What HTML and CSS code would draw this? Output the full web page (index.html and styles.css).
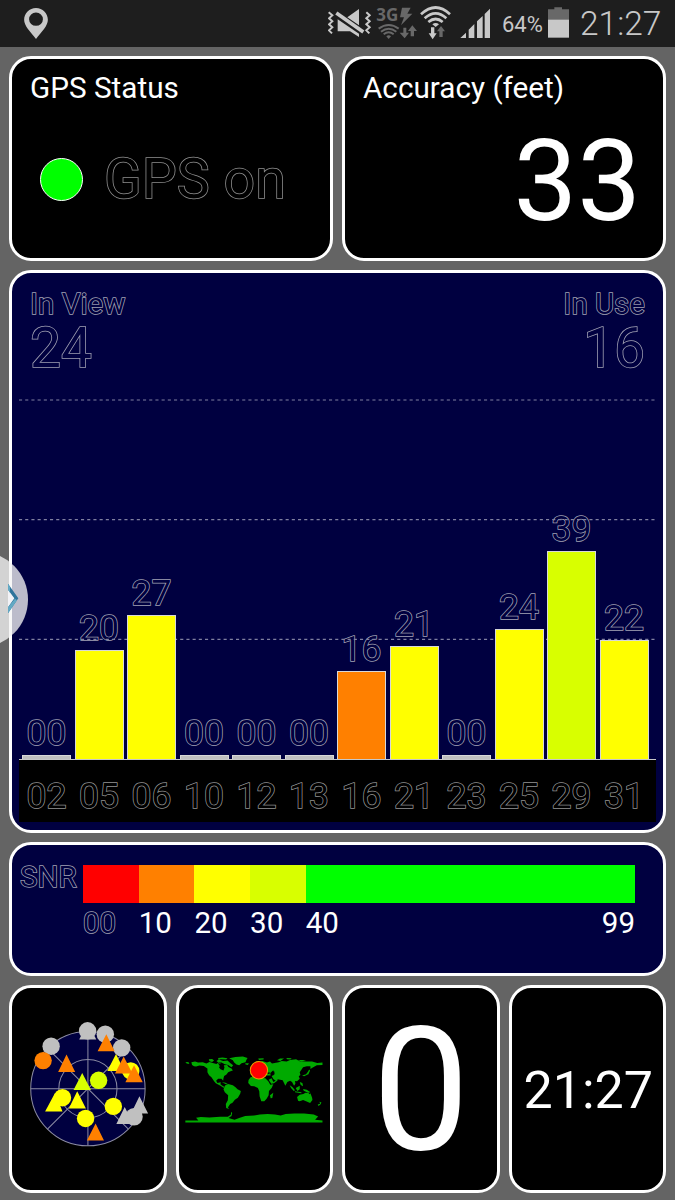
FILE: index.html
```html
<!DOCTYPE html>
<html lang="en">
<head>
<meta charset="utf-8">
<title>GPS Status</title>
<link rel="stylesheet" href="styles.css">
</head>
<body>
<header class="statusbar">
  <svg class="pin" viewBox="72 24 72 94"><path fill="#c8c8c8" fill-rule="evenodd" d="M108 24C88 24 72 40 72 60C72 79 91 96 108 118C125 96 144 79 144 60C144 40 128 24 108 24ZM108 38a21 20 0 1 1 0 40a21 20 0 1 1 0-40Z"/></svg>
  <div class="tray">
    <svg class="i-mute" viewBox="24 0 141 141">
      <g fill="none" stroke="#c8c8c8" stroke-width="6"><path d="M26 37L37 46L27 55L37 64L27 73L37 82L27 91L36 100M139 37L149 46L139 55L149 64L139 73L149 82L139 91L148 100"/></g>
      <path fill="#c8c8c8" d="M53 58L117 101V111L90 94H53ZM82 52L117 27V76Z"/>
      <path stroke="#c8c8c8" stroke-width="11" d="M49 39L130 96"/>
    </svg>
    <svg class="i-data" viewBox="165 0 132 141">
      <text class="g3" x="169" y="64">3G</text>
      <g fill="#686868"><path d="M246 23H272L262 41H277L243 76L252 52H240Z"/><path d="M250 83H259V98H267L254 115L239 98H250ZM272 109H282V93H291L277 76L264 93H272Z"/><path d="M199 109Q206 102 213 109L206 117Z"/></g>
      <g fill="none" stroke="#686868" stroke-width="6"><path d="M176 86Q206 64 236 86M183 95Q206 77 229 95M191 103Q206 91 221 103"/></g>
    </svg>
    <svg class="i-wifi" viewBox="297 0 108 141">
      <g fill="none" stroke="#c8c8c8" stroke-width="8"><path d="M303 43Q347 2 390 43M314 55Q347 25 379 55M325 66Q347 48 368 66"/></g>
      <path fill="#c8c8c8" d="M337 73Q347 65 357 73L347 81ZM333 82H343V100H350L338 118L326 100H333Z"/>
      <path fill="#686868" d="M358 111H368V94H375L363 78L351 94H358Z"/>
    </svg>
    <svg class="i-signal" viewBox="405 0 135 141"><path fill="#c8c8c8" d="M421 114L438 98V114ZM446 89L463 72V114H446ZM471 64L488 48V114H471ZM494 42L510 26V114H494Z"/></svg>
    <span class="pct">64%</span>
    <svg class="i-batt" viewBox="672 0 90 141"><path fill="#686868" d="M684 28H703V22H726V28H747V60H684Z"/><path fill="#c8c8c8" d="M684 59H747V113H684Z"/></svg>
    <span class="clock">21:27</span>
  </div>
</header>

<main class="panels">
  <section class="row top">
    <article class="card">
      <h2 class="title">GPS Status</h2>
      <div class="state"><i class="led"></i><span class="outline dark gps">GPS on</span></div>
    </article>
    <article class="card">
      <h2 class="title">Accuracy (feet)</h2>
      <div class="accuracy">33</div>
    </article>
  </section>

  <section class="card navy chart">
    <div class="counts outline">
      <div><p class="lbl">In View</p><p class="num">24</p></div>
      <div class="right"><p class="lbl">In Use</p><p class="num">16</p></div>
    </div>
    <div class="plot">
      <div class="bars outline">
        <div class="col"><span>00</span><i class="bar gray" style="height:4.5px"></i></div>
        <div class="col"><span>20</span><i class="bar yellow" style="height:109px"></i></div>
        <div class="col"><span>27</span><i class="bar yellow" style="height:144.5px"></i></div>
        <div class="col"><span>00</span><i class="bar gray" style="height:4.5px"></i></div>
        <div class="col"><span>00</span><i class="bar gray" style="height:4.5px"></i></div>
        <div class="col"><span>00</span><i class="bar gray" style="height:4.5px"></i></div>
        <div class="col"><span>16</span><i class="bar orange" style="height:88.5px"></i></div>
        <div class="col"><span>21</span><i class="bar yellow" style="height:113px"></i></div>
        <div class="col"><span>00</span><i class="bar gray" style="height:4.5px"></i></div>
        <div class="col"><span>24</span><i class="bar yellow" style="height:130.5px"></i></div>
        <div class="col"><span>39</span><i class="bar lime" style="height:208.5px"></i></div>
        <div class="col"><span>22</span><i class="bar yellow" style="height:119px"></i></div>
      </div>
      <svg class="grid" viewBox="0 0 636 384"><g stroke="#8080a0" stroke-width="1.2" stroke-dasharray="3.1 3.1"><path d="M0 25H636M0 144.7H636M0 264.4H636"/></g></svg>
    </div>
    <div class="ids outline dark"><span>02</span><span>05</span><span>06</span><span>10</span><span>12</span><span>13</span><span>16</span><span>21</span><span>23</span><span>25</span><span>29</span><span>31</span></div>
  </section>

  <section class="card navy snr">
    <span class="snr-label outline">SNR</span>
    <div class="scale">
      <div class="ramp"><i class="red"></i><i class="orange"></i><i class="yellow"></i><i class="lime"></i><i class="green"></i></div>
      <div class="ticks"><span class="outline">00</span><span>10</span><span>20</span><span>30</span><span>40</span><span class="last">99</span></div>
    </div>
  </section>

  <section class="row bottom">
    <article class="card">
      <svg class="fill" viewBox="36 26 453 600">
        <circle cx="263" cy="325" r="171" fill="#000040"/>
        <g fill="none" stroke="#8c8ca4" stroke-width="3"><circle cx="263" cy="325" r="171"/><circle cx="263" cy="325" r="87"/><path d="M92 325H434M263 154V496M142 446L384 204M142 204L384 446"/></g>
        <g fill="#c0c0c0"><circle cx="262" cy="152" r="26"/><path d="M237 178L262 128L288 178Z"/><circle cx="315" cy="162" r="26"/><circle cx="364" cy="203" r="26"/><circle cx="153" cy="198" r="26"/><circle cx="401" cy="409" r="26"/><path d="M348 431L373 380L399 431ZM392 399L417 348L443 399Z"/></g>
        <circle cx="129" cy="241" r="26" fill="#ff8000"/>
        <path fill="#ff8000" d="M174 275L199 223L225 275ZM292 213L318 162L343 213ZM260 480L286 429L311 480Z"/>
        <g fill="#ff0"><circle cx="391" cy="272" r="26"/><circle cx="339" cy="378" r="26"/><circle cx="187" cy="352" r="26"/><circle cx="256" cy="414" r="26"/><path d="M321 272L347 221L372 272ZM135 393L165 337L187 393ZM206 384L231 333L257 384Z"/></g>
        <path fill="#ff8000" d="M344 280L370 229L396 280ZM375 306L401 255L427 306Z"/>
        <circle cx="295" cy="300" r="26" fill="#d8ff00"/><path fill="#d8ff00" d="M220 329L246 278L272 329Z"/>
      </svg>
    </article>
    <article class="card">
      <svg class="fill" viewBox="27 -124 453 600">
        <g fill="#00aa00">
          <path d="M46 96L55 95L58 101L50 100ZM64 96L75 94L84 97L98 96L109 100L118 95L128 98L139 101L145 97L151 100L154 105L146 110L151 117L160 121L163 112L161 105L171 104L175 110L184 115L188 121L181 123L174 126L169 133L162 137L160 144L159 151L154 145L144 145L138 151L142 158L152 156L151 162L159 168L166 170L160 172L151 166L137 159L132 153L124 141L117 135L112 126L112 115L101 107L88 106L78 109L72 108L66 104Z"/>
          <path d="M116 87L126 86L132 91L126 95L118 93ZM139 92L146 88L159 92L172 91L180 98L189 105L184 111L174 104L164 102L154 97L144 97ZM144 83L157 82L172 84L168 88L153 87L145 88ZM177 84L196 80L218 79L232 83L228 90L226 96L214 99L207 105L199 103L192 97L188 90ZM155 155L166 157L173 161L166 161ZM225 99L236 99L233 104L226 103Z"/>
          <path d="M166 164L174 161L188 165L196 171L202 177L212 182L210 190L203 202L194 208L187 217L180 221L173 231L177 236L168 233L167 221L173 210L174 195L164 186L160 177L163 171Z"/>
          <path d="M241 125L250 119L254 109L264 97L276 92L290 97L299 94L305 100L325 96L334 92L349 94L359 89L377 87L388 93L408 94L425 94L440 98L456 97L456 104L439 105L427 112L420 116L420 108L409 108L398 111L388 126L390 134L385 138L388 145L380 153L374 152L375 160L371 166L365 155L359 151L351 155L345 166L337 150L322 147L321 151L311 159L303 160L295 148L304 144L309 155L316 151L309 146L304 137L311 134L309 120L300 128L301 136L286 136L280 129L270 132L258 124L251 132L242 134Z"/>
          <path d="M241 141L255 138L268 142L285 144L294 153L300 163L309 162L304 173L296 182L295 195L289 205L282 213L273 213L268 198L267 183L263 173L252 168L242 167L234 158L235 149ZM299 195L309 187L306 203L301 204Z"/>
          <path d="M380 200L388 193L399 191L405 187L414 188L418 192L420 189L425 202L426 209L419 218L407 213L398 209L388 213L383 211ZM398 176L409 178L420 186L413 187L400 181ZM358 165L366 170L374 180L370 182L362 173ZM376 173L388 166L388 177L381 182ZM374 183L393 186L393 189L374 186ZM388 155L396 158L398 168L391 164ZM395 136L407 132L413 124L416 118L419 121L414 132L401 138ZM447 214L453 216L450 222L444 227L442 222L449 220ZM242 116L248 110L251 119L243 122ZM264 85L280 84L280 88L266 89ZM320 90L329 85L341 85L330 92ZM348 83L364 84L360 88L350 87ZM382 89L407 89L394 94Z"/>
          <path d="M46 270H85L78 262L92 260L118 261L150 259L173 259L182 253L183 244L186 248L184 257L175 263L193 268L207 263L225 257L252 255L269 252L292 251L314 252L331 255L346 251L372 249L401 249L430 252L443 258L434 268L456 270V276H46Z"/>
        </g>
        <path fill="#000" d="M143 98L152 101L159 103L157 108L149 107ZM286 125L292 127L299 127L297 131L287 130ZM307 123L312 124L313 133L309 131Z"/>
        <circle cx="266" cy="120" r="26" fill="#f00" stroke="#e8a000" stroke-width="3"/>
      </svg>
    </article>
    <article class="card center"><span class="speed">0</span></article>
    <article class="card center"><span class="time">21:27</span></article>
  </section>
</main>

<aside class="handle"><svg viewBox="0 0 84 282"><path fill="#f2f2f6" d="M24 107L45 136L24 166Z"/><path fill="#2f749c" d="M24 92L55 136L24 181V163L43 136L24 110Z"/><path fill="#63a9c4" d="M24 92L30 101V119L24 110ZM24 163L45 137L51 142L24 181Z"/></svg></aside>
</body>
</html>
```

FILE: styles.css
```css
* { box-sizing: border-box; margin: 0; padding: 0; }
body { width: 675px; height: 1200px; overflow: hidden; background: #646464; color: #fff; font-family: Roboto, sans-serif; }
svg, i { display: block; }

.statusbar { height: 47px; background: #1e1e1e; color: #c8c8c8; display: flex; justify-content: space-between; }
.pin { width: 24px; height: 31px; margin: 8px 0 0 24px; }
.tray { display: flex; height: 47px; width: 347px; }
.tray svg { height: 47px; flex: none; }
.i-mute { width: 47px; }
.i-data { width: 44px; }
.i-wifi { width: 36px; }
.i-signal { width: 45px; }
.i-batt { width: 30px; }
.g3 { font: 700 51px "Open Sans", sans-serif; fill: #686868; }
.pct { width: 44px; padding-left: 2px; font-size: 22px; line-height: 49px; white-space: nowrap; }
.clock { width: 101px; padding-left: 6px; font-size: 33.5px; font-weight: 300; line-height: 47px; }

.panels { display: flex; flex-direction: column; gap: 9px; padding: 8.5px 9px 0; }
.row { display: grid; gap: 9px; }
.top { grid-template-columns: 1fr 1fr; height: 205.5px; }
.bottom { grid-template-columns: repeat(4, 1fr); height: 206px; }
.card { background: #000; border: 3px solid #fff; border-radius: 22px; }
.navy { background: #000040; }

/* Hollow text: the fill repeats the panel colour and covers the inner half of the stroke */
.outline { color: #000040; -webkit-text-stroke: 1.5px #a2a2b4; paint-order: stroke fill; }
.dark { color: #000; -webkit-text-stroke-color: #929292; }

.title { font-size: 29.7px; font-weight: 400; line-height: 34px; padding: 12px 0 0 18px; }
.state { display: flex; align-items: center; padding: 45px 0 0 28px; gap: 21px; }
.led { width: 43px; height: 43px; border-radius: 50%; background: #0f0; border: 1px solid #fff; }
.gps { font-size: 55.5px; line-height: 60px; }
.accuracy { font-size: 113.5px; line-height: 115px; text-align: right; padding: 19px 22px 0 0; }

.chart { height: 563px; padding: 14px 7px 0; }
.counts { display: flex; justify-content: space-between; padding: 0 11px; height: 88px; }
.right { text-align: right; }
.lbl { font-size: 29.5px; line-height: 34px; }
.num { font-size: 55px; line-height: 54px; }
.plot { display: grid; height: 385px; border-bottom: 1px solid #c8c8c8; }
.plot > * { grid-area: 1 / 1; }
.grid { width: 636px; height: 384px; z-index: 1; }
.bars, .ids { display: grid; grid-template-columns: repeat(12, 49px); gap: 3.5px; padding-left: 3px; font-size: 35.5px; text-align: center; }
.col { display: flex; flex-direction: column; justify-content: flex-end; height: 384px; }
.col span { line-height: 36px; margin-bottom: 4px; }
.bar { border: solid #d8d8d8; border-width: 1px 1px 0; position: relative; z-index: 2; }
.ids { background: #000; height: 62px; line-height: 36px; padding-top: 18px; }
.gray { background: #c0c0c0; }
.red { background: #f00; }
.orange { background: #ff8000; }
.yellow { background: #ff0; }
.lime { background: #d8ff00; }
.green { background: #0f0; }

.snr { height: 134px; display: flex; padding: 20px 0 0 7px; font-size: 29.5px; }
.snr-label { width: 64px; line-height: 25px; padding-left: 1px; }
.scale { width: 552px; }
.ramp { display: grid; grid-template-columns: repeat(4, 55.7px) 1fr; height: 38px; }
.ticks { display: grid; grid-template-columns: repeat(5, 55.7px) 1fr; line-height: 40px; }
.last { text-align: right; }

.fill { width: 100%; height: 100%; }
.center { display: flex; align-items: center; justify-content: center; }
.speed { font-size: 173px; line-height: 200px; padding-top: 2px; }
.time { font-size: 52px; line-height: 60px; padding: 3px 0 0 2px; }

.handle { position: absolute; left: -66px; top: 552px; width: 94px; height: 95px; border-radius: 50%; background: rgba(245, 245, 245, .77); overflow: hidden; }
.handle svg { width: 28px; height: 94px; margin: 1px 0 0 66px; }
```
